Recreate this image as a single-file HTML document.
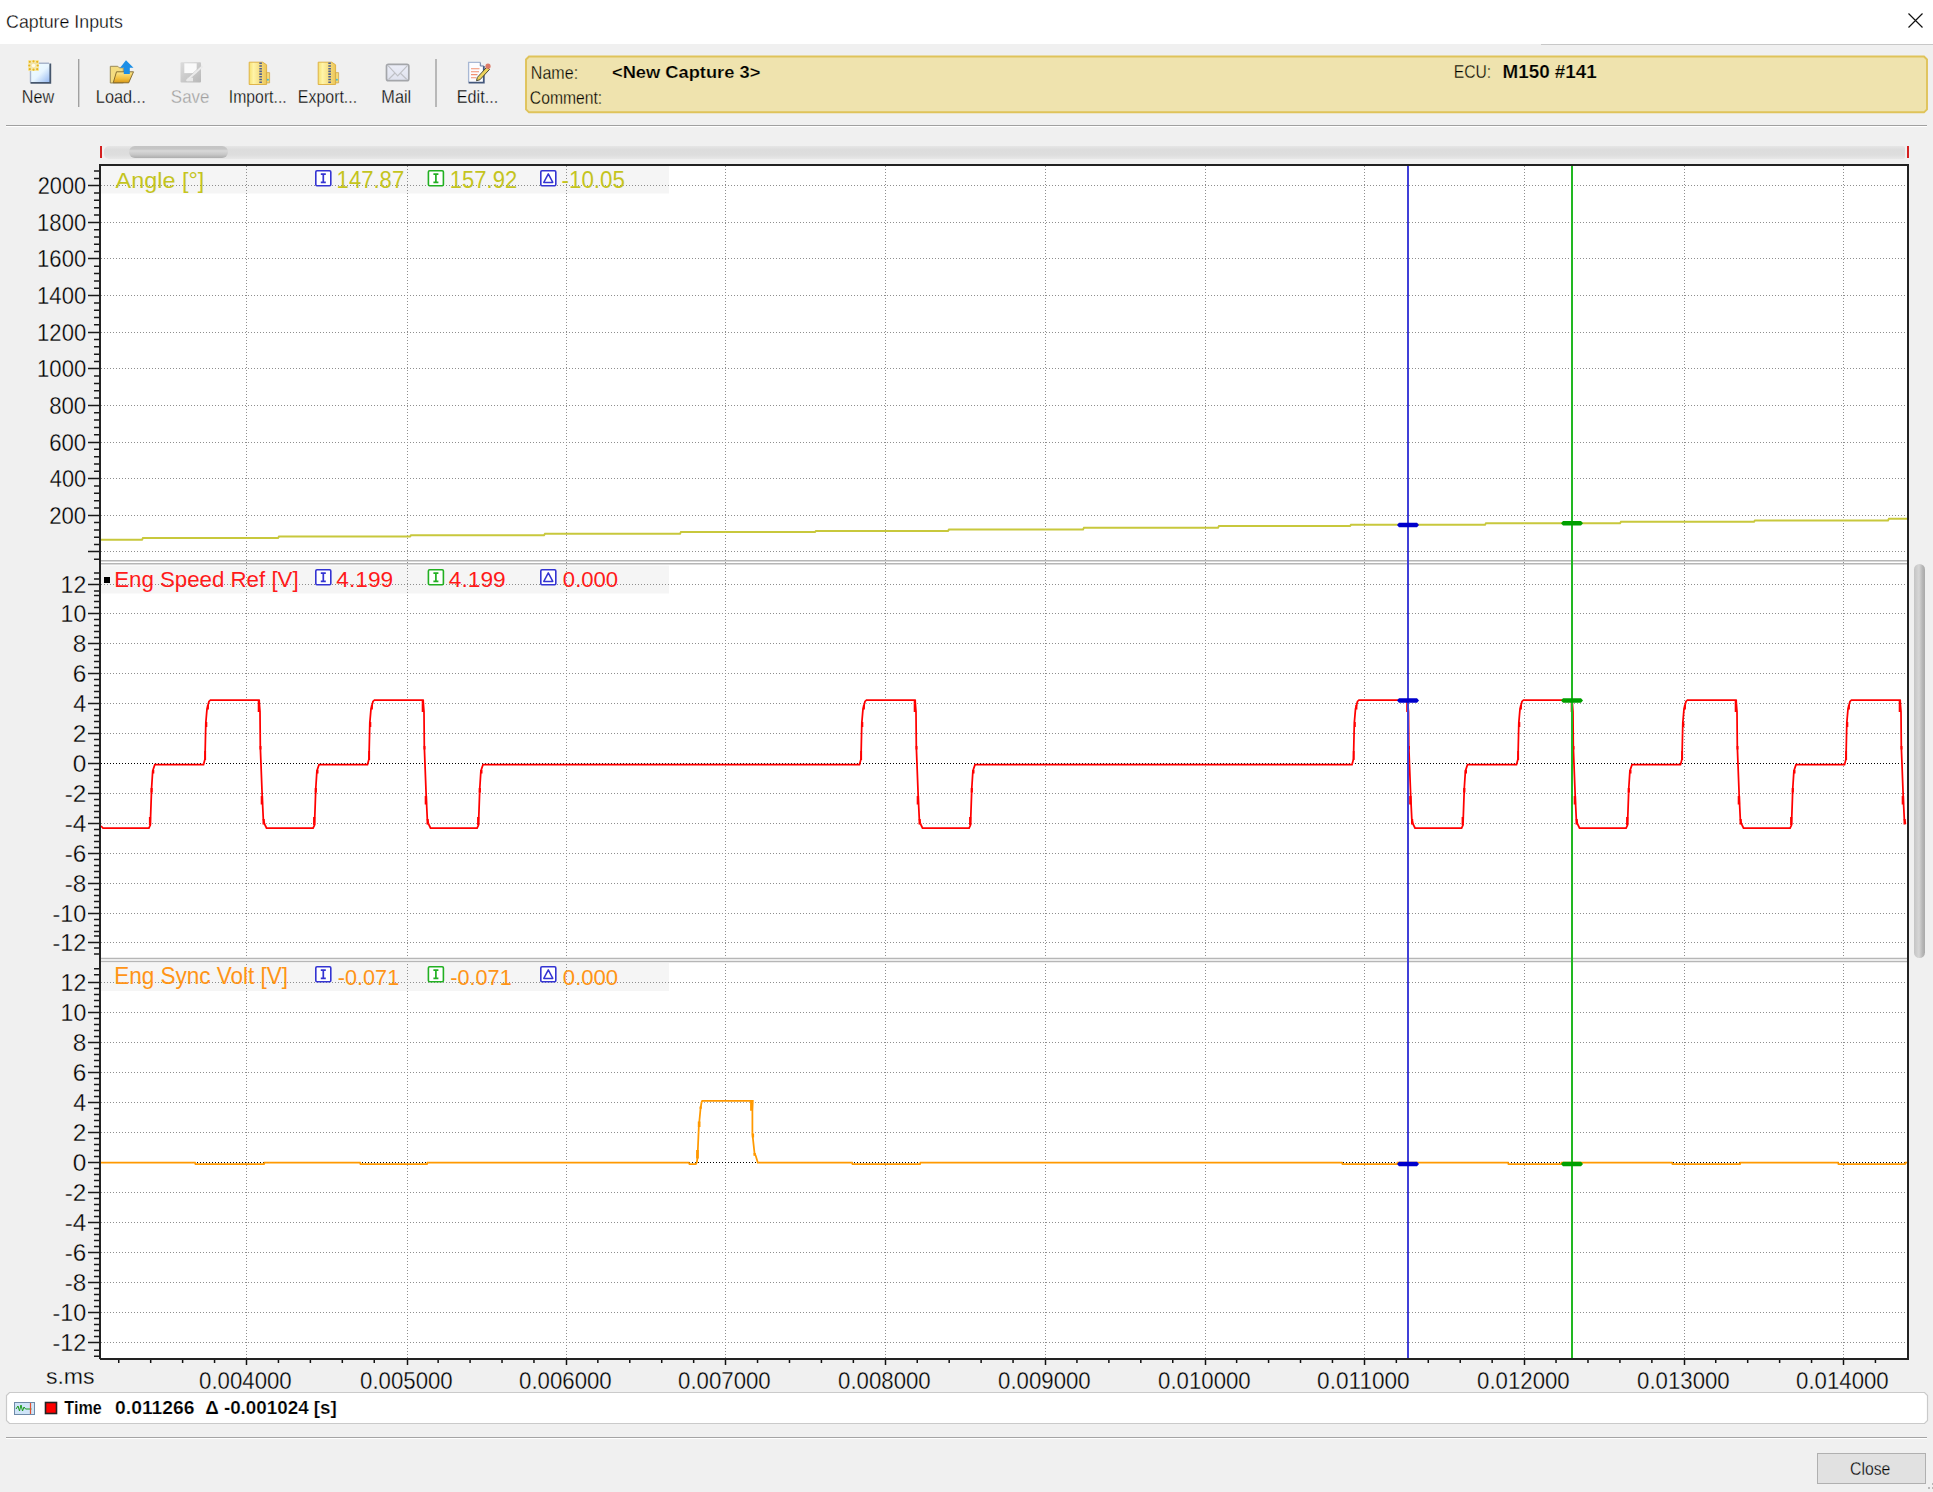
<!DOCTYPE html>
<html><head><meta charset="utf-8">
<style>
html,body{margin:0;padding:0;}
body{width:1933px;height:1492px;overflow:hidden;background:#f0f0f0;position:relative;font-family:"Liberation Sans", sans-serif;color:#000;}
.ab{position:absolute;}
svg text{font-family:"Liberation Sans", sans-serif;}
</style></head><body>
<div class="ab" style="left:0;top:0;width:1933px;height:44px;background:#fff"></div>
<svg class="ab" style="left:1900px;top:5px" width="33" height="33"><path d="M8.5 8.5L22.5 22.5M22.5 8.5L8.5 22.5" stroke="#111" stroke-width="1.2"/></svg>
<div class="ab" style="left:1541px;top:44px;width:392px;height:1px;background:#c8c8c8"></div>
<svg class="ab" style="left:0;top:0" width="520" height="120" viewBox="0 0 520 120">
 <defs>
  <linearGradient id="gNew" x1="0" y1="0" x2="1" y2="1"><stop offset="0" stop-color="#f0ffff"/><stop offset="0.5" stop-color="#e8f6ff"/><stop offset="1" stop-color="#8fb4f0"/></linearGradient>
  <linearGradient id="gFold" x1="0" y1="0" x2="0" y2="1"><stop offset="0" stop-color="#fbe890"/><stop offset="0.6" stop-color="#f2c040"/><stop offset="1" stop-color="#d89818"/></linearGradient>
  <linearGradient id="gZip" x1="0" y1="0" x2="1" y2="0"><stop offset="0" stop-color="#f6e070"/><stop offset="0.25" stop-color="#fff4a8"/><stop offset="1" stop-color="#ecc658"/></linearGradient>
  <linearGradient id="gSave" x1="0" y1="0" x2="1" y2="1"><stop offset="0" stop-color="#dcdcdc"/><stop offset="1" stop-color="#b8b8b8"/></linearGradient>
  <linearGradient id="gMail" x1="0" y1="0" x2="0" y2="1"><stop offset="0" stop-color="#eceef8"/><stop offset="1" stop-color="#dfe2ee"/></linearGradient>
 </defs>
 <!-- New -->
 <rect x="31" y="63.5" width="19.5" height="19" fill="url(#gNew)"/>
 <path d="M30.5 82.5V63.3H49" stroke="#a9b6cc" stroke-width="1.4" fill="none"/>
 <path d="M50.3 63.5V82.8H30.5" stroke="#46566c" stroke-width="1.8" fill="none"/>
 <rect x="28" y="60" width="11" height="11" fill="#f7e6a0" opacity="0.9"/>
 <g fill="#e6b41c">
  <circle cx="29.8" cy="61.8" r="1.1"/><circle cx="33.5" cy="61.3" r="1.1"/><circle cx="37.2" cy="61.8" r="1.1"/>
  <circle cx="29.3" cy="65.5" r="1.1"/><circle cx="37.7" cy="65.5" r="1.1"/>
  <circle cx="29.8" cy="69.2" r="1.1"/><circle cx="33.5" cy="69.7" r="1.1"/><circle cx="37.2" cy="69.2" r="1.1"/>
 </g>
 <circle cx="33.5" cy="65.5" r="1.8" fill="#fffbe6"/>
 <!-- Load -->
 <path d="M110.3 83V66.3h7.5l1.5 1.5h4v15z" fill="#f4dc80" stroke="#9a8a58" stroke-width="1"/>
 <path d="M116.5 71.8h17l-4.8 11h-15.5z" fill="url(#gFold)" stroke="#7a6228" stroke-width="0.9"/>
 <path d="M126 60.3l7.5 7.5h-3.7v6.2h-6v-6.2h-3.7z" fill="#1c8ee6"/>
 <!-- Save (disabled) -->
 <rect x="180.5" y="62.3" width="20.5" height="20.3" rx="1" fill="url(#gSave)"/>
 <rect x="184.3" y="63.3" width="12.4" height="9.8" fill="#fafafa"/>
 <rect x="187.4" y="77.7" width="5.6" height="3.6" fill="#e8e8e8"/>
 <path d="M186.4 80.8L202.4 66.3" stroke="#eaeaea" stroke-width="2.2"/>
 <path d="M185.6 79.8L201.2 65.6" stroke="#c8c8c8" stroke-width="0.6"/>
 <!-- Import -->
 <path d="M249.2 62.2h13.5l3.9 2.6v19.7h-17.4z" fill="url(#gZip)" stroke="#dcae3c" stroke-width="0.9"/>
 <path d="M266.6 72.6h3v10.3h-3z" fill="#f4dc78" stroke="#cfa040" stroke-width="0.7"/>
 <circle cx="267.9" cy="79.8" r="1" fill="#40b8d8"/>
 <path d="M260.6 62.5v21.5" stroke="#50608e" stroke-width="2.6" stroke-dasharray="1.6 1.1"/>
 <!-- Export -->
 <path d="M318.2 62.2h13.5l3.9 2.6v19.7h-17.4z" fill="url(#gZip)" stroke="#dcae3c" stroke-width="0.9"/>
 <path d="M335.6 72.6h3v10.3h-3z" fill="#f4dc78" stroke="#cfa040" stroke-width="0.7"/>
 <circle cx="336.9" cy="79.8" r="1" fill="#40b8d8"/>
 <path d="M329.6 62.5v21.5" stroke="#50608e" stroke-width="2.6" stroke-dasharray="1.6 1.1"/>
 <!-- Mail -->
 <rect x="386.5" y="64.3" width="22.3" height="16.4" rx="2" fill="url(#gMail)" stroke="#a4a6aa" stroke-width="1.7"/>
 <path d="M388 65.6l9.7 10.3l9.7-10.3M388.5 79.5l6.3-6.2M406.8 79.5l-6.3-6.2" stroke="#bfc1c6" stroke-width="1.2" fill="none"/>
 <!-- Edit -->
 <path d="M468.8 62.5h11.5l3.5 3.5v16.3h-15z" fill="#fdfdff"/>
 <path d="M468.6 82.3V62.3h11.8" stroke="#a8b8d4" stroke-width="1.3" fill="none"/>
 <path d="M483.8 66v16.7h-15.2" stroke="#44587c" stroke-width="1.8" fill="none"/>
 <path d="M480.3 62.5v3.5h3.5" stroke="#6a7ea0" stroke-width="1" fill="#dfe8f8"/>
 <path d="M471 68.7h8.5M471 71.8h8M471 74.6h6.5M471 77.7h5" stroke="#f29070" stroke-width="1.1"/>
 <path d="M477.3 77.4l9.6-10.4l2.6 2.4l-9.6 10.4l-3.4 0.9z" fill="#ecd25a" stroke="#3a3a2a" stroke-width="0.9"/>
 <circle cx="488" cy="66.2" r="2.6" fill="#dc7a68"/>
 <!-- separators -->
 <rect x="78" y="59" width="1.4" height="48" fill="#a0a0a0"/>
 <rect x="435.3" y="59" width="1.4" height="48" fill="#a0a0a0"/>
</svg>

<svg class="ab" style="left:520px;top:50px" width="1413" height="70"><path d="M9 6.5H1404L1407 9.5V59.3L1404 62.3H9L6 59.3V9.5Z" fill="#efe3ae" stroke="#dfc35a" stroke-width="1.9"/></svg>
<div class="ab" style="left:6px;top:125px;width:1921px;height:1px;background:#a0a0a0"></div>
<div class="ab" style="left:6px;top:126px;width:1921px;height:1px;background:#fff"></div>
<div class="ab" style="left:104px;top:146px;width:1801px;height:12.5px;border-radius:5px 2px 2px 5px;background:linear-gradient(#e6e6e6,#dcdcdc 30%,#dedede 70%,#e8e8e8)"></div>
<div class="ab" style="left:129px;top:146px;width:99px;height:12px;border-radius:6px;background:linear-gradient(#c4c4c4 0,#c6c6c6 25%,#d8d8d8 40%,#c8c8c8 70%,#adadad 100%)"></div>
<div class="ab" style="left:100px;top:146px;width:2px;height:12px;background:#d42020"></div>
<div class="ab" style="left:1907px;top:146px;width:2px;height:12px;background:#d42020"></div>
<div class="ab" style="left:101px;top:166px;width:1806px;height:1192px;background:#fff"></div>
<div class="ab" style="left:1914px;top:564px;width:11px;height:394px;border-radius:5.5px;background:linear-gradient(90deg,#c4c4c4,#d6d6d6 45%,#b4b4b4 80%,#aaaaaa)"></div>
<svg class="ab" style="left:0;top:1385px" width="1933" height="45"><path d="M9.5 7.5H1924.5L1927.5 10.5V35.5L1924.5 38.5H9.5L6.5 35.5V10.5Z" fill="#fff" stroke="#cacaca" stroke-width="1.2"/></svg>
<div class="ab" style="left:6px;top:1436.5px;width:1921px;height:1.5px;background:#a4a4a4"></div>
<div class="ab" style="left:6px;top:1438px;width:1921px;height:1px;background:#fff"></div>
<div class="ab" style="left:1817px;top:1453px;width:107px;height:29px;border:1.5px solid #b0b0b0;background:#e1e1e1"></div>
<svg class="ab" style="left:1920px;top:1475px" width="13" height="17"><rect x="8" y="12" width="2" height="2" fill="#b8b8b8"/><rect x="12" y="12" width="2" height="2" fill="#b8b8b8"/><rect x="12" y="8" width="2" height="2" fill="#b8b8b8"/></svg>
<svg class="ab" style="left:0;top:1390px" width="60" height="30">
 <rect x="14.5" y="12.5" width="20" height="12" fill="#cfe4f8" stroke="#6f8aa8" stroke-width="1"/>
 <path d="M16 19l2-3l1.5 5l1.5-6l1.5 6l1.5-4l1.5 2h6" stroke="#1a9a1a" stroke-width="1" fill="none"/>
 <path d="M30.5 13v11" stroke="#e05030" stroke-width="1.2"/>
 <rect x="45.5" y="12.5" width="11" height="11" fill="#ff0000" stroke="#222" stroke-width="1.6"/>
</svg>
<svg class="ab" style="left:0;top:0" width="1933" height="1492" viewBox="0 0 1933 1492">
<rect x="101" y="166" width="568" height="27.5" fill="#f5f5f5"/>
<rect x="101" y="565.5" width="568" height="28" fill="#f5f5f5"/>
<rect x="101" y="963" width="568" height="28" fill="#f5f5f5"/>
<path d="M101 551.5H1907 M101 515.5H1907 M101 478.5H1907 M101 442.5H1907 M101 405.5H1907 M101 368.5H1907 M101 332.5H1907 M101 295.5H1907 M101 258.5H1907 M101 222.5H1907 M101 185.5H1907 M101 942.5H1907 M101 913.5H1907 M101 883.5H1907 M101 853.5H1907 M101 823.5H1907 M101 793.5H1907 M101 733.5H1907 M101 703.5H1907 M101 673.5H1907 M101 643.5H1907 M101 613.5H1907 M101 584.5H1907 M101 1342.5H1907 M101 1312.5H1907 M101 1282.5H1907 M101 1252.5H1907 M101 1222.5H1907 M101 1192.5H1907 M101 1132.5H1907 M101 1102.5H1907 M101 1072.5H1907 M101 1042.5H1907 M101 1012.5H1907 M101 982.5H1907" stroke="#8e8e8e" stroke-width="1" stroke-dasharray="1 2" shape-rendering="crispEdges" fill="none"/>
<path d="M246.5 166V1358 M407.5 166V1358 M566.5 166V1358 M725.5 166V1358 M885.5 166V1358 M1045.5 166V1358 M1205.5 166V1358 M1364.5 166V1358 M1524.5 166V1358 M1684.5 166V1358 M1843.5 166V1358" stroke="#8e8e8e" stroke-width="1" stroke-dasharray="1 2" shape-rendering="crispEdges" fill="none"/>
<path d="M101 763.5H1907 M101 1162.5H1907" stroke="#000" stroke-width="1" stroke-dasharray="1 2" shape-rendering="crispEdges" fill="none"/>
<path d="M101 560.8H1907M101 563.8H1907M101 958.5H1907M101 961.5H1907" stroke="#b6b6b6" stroke-width="1.6"/>
<path d="M101 539.7H142L143 538.0H278L279 536.6H410L411 535.3H544L545 533.8H680L681 531.9H815L816 530.9H948L949 529.6H1083L1084 527.8H1218L1219 526.1H1350L1351 524.8H1485L1486 523.3H1620L1621 521.7H1754L1755 520.4H1888L1889 518.8H1907" stroke="#c8c83c" stroke-width="2" fill="none"/>
<path d="M101 826 L103 828 L148.9 828 L150.3 825 L151.6 788 L152.7 771 L154.8 764.7 L203.5 764.7 L205 759 L205.8 723 L207 709 L209 701.5 L210.5 700 L259 700 L260 712 L260.3 746 L262.2 796 L263.3 819 L264.5 824 L266.5 828 L313.1 828 L314.5 825 L315.8 788 L316.9 771 L319 764.7 L367.5 764.7 L369 759 L369.8 723 L371 709 L373 701.5 L374.5 700 L423 700 L424 712 L424.3 746 L426.2 796 L427.3 819 L428.5 824 L430.5 828 L477.1 828 L478.5 825 L479.8 788 L480.9 771 L483 764.7 L859.5 764.7 L861 759 L861.8 723 L863 709 L865 701.5 L866.5 700 L915 700 L916 712 L916.3 746 L918.2 796 L919.3 819 L920.5 824 L922.5 828 L969.1 828 L970.5 825 L971.8 788 L972.9 771 L975 764.7 L1352 764.7 L1353.5 759 L1354.3 723 L1355.5 709 L1357.5 701.5 L1359 700 L1407.5 700 L1408.5 712 L1408.8 746 L1410.7 796 L1411.8 819 L1413 824 L1415 828 L1461.6 828 L1463 825 L1464.3 788 L1465.4 771 L1467.5 764.7 L1516.5 764.7 L1518 759 L1518.8 723 L1520 709 L1522 701.5 L1523.5 700 L1572 700 L1573 712 L1573.3 746 L1575.2 796 L1576.3 819 L1577.5 824 L1579.5 828 L1626.1 828 L1627.5 825 L1628.8 788 L1629.9 771 L1632 764.7 L1680.5 764.7 L1682 759 L1682.8 723 L1684 709 L1686 701.5 L1687.5 700 L1736 700 L1737 712 L1737.3 746 L1739.2 796 L1740.3 819 L1741.5 824 L1743.5 828 L1790.1 828 L1791.5 825 L1792.8 788 L1793.9 771 L1796 764.7 L1844.5 764.7 L1846 759 L1846.8 723 L1848 709 L1850 701.5 L1851.5 700 L1900 700 L1901 712 L1901.3 746 L1903.2 796 L1904.3 819 L1905.5 824" stroke="#ff0000" stroke-width="1.75" fill="none"/>
<path d="M148.9 817h2.2v8h-2.2zM150.5 788h2.2v4.5h-2.2zM152.1 770h2.2v3.5h-2.2zM204.3 751h1.8v9h-1.8zM205.5 722h1.8v5h-1.8zM206.9 705h2v4.5h-2zM257.7 700h2.4v12h-2.4zM259.5 746h2v3.5h-2zM260.7 796h2.4v8.5h-2.4zM262.5 819h2.2v5.5h-2.2zM313.1 817h2.2v8h-2.2zM314.7 788h2.2v4.5h-2.2zM316.3 770h2.2v3.5h-2.2zM368.3 751h1.8v9h-1.8zM369.5 722h1.8v5h-1.8zM370.9 705h2v4.5h-2zM421.7 700h2.4v12h-2.4zM423.5 746h2v3.5h-2zM424.7 796h2.4v8.5h-2.4zM426.5 819h2.2v5.5h-2.2zM477.1 817h2.2v8h-2.2zM478.7 788h2.2v4.5h-2.2zM480.3 770h2.2v3.5h-2.2zM860.3 751h1.8v9h-1.8zM861.5 722h1.8v5h-1.8zM862.9 705h2v4.5h-2zM913.7 700h2.4v12h-2.4zM915.5 746h2v3.5h-2zM916.7 796h2.4v8.5h-2.4zM918.5 819h2.2v5.5h-2.2zM969.1 817h2.2v8h-2.2zM970.7 788h2.2v4.5h-2.2zM972.3 770h2.2v3.5h-2.2zM1352.8 751h1.8v9h-1.8zM1354 722h1.8v5h-1.8zM1355.4 705h2v4.5h-2zM1406.2 700h2.4v12h-2.4zM1408 746h2v3.5h-2zM1409.2 796h2.4v8.5h-2.4zM1411 819h2.2v5.5h-2.2zM1461.6 817h2.2v8h-2.2zM1463.2 788h2.2v4.5h-2.2zM1464.8 770h2.2v3.5h-2.2zM1517.3 751h1.8v9h-1.8zM1518.5 722h1.8v5h-1.8zM1519.9 705h2v4.5h-2zM1570.7 700h2.4v12h-2.4zM1572.5 746h2v3.5h-2zM1573.7 796h2.4v8.5h-2.4zM1575.5 819h2.2v5.5h-2.2zM1626.1 817h2.2v8h-2.2zM1627.7 788h2.2v4.5h-2.2zM1629.3 770h2.2v3.5h-2.2zM1681.3 751h1.8v9h-1.8zM1682.5 722h1.8v5h-1.8zM1683.9 705h2v4.5h-2zM1734.7 700h2.4v12h-2.4zM1736.5 746h2v3.5h-2zM1737.7 796h2.4v8.5h-2.4zM1739.5 819h2.2v5.5h-2.2zM1790.1 817h2.2v8h-2.2zM1791.7 788h2.2v4.5h-2.2zM1793.3 770h2.2v3.5h-2.2zM1845.3 751h1.8v9h-1.8zM1846.5 722h1.8v5h-1.8zM1847.9 705h2v4.5h-2zM1898.7 700h2.4v12h-2.4zM1900.5 746h2v3.5h-2zM1901.7 796h2.4v8.5h-2.4zM1903.5 819h2.2v5.5h-2.2z" fill="#ff0000"/>
<path d="M101 1162.5H195L195.5 1164.0H264L264.5 1162.5H360L360.5 1164.0H427L427.5 1162.5H688.8L689.5 1164.1H695.8L696.8 1162.4L697.5 1158L698.8 1127L700.5 1109L701.5 1102.5L702.2 1100.8H752.8L752.4 1111L752.4 1133.6L754.5 1153L755.8 1156L757.8 1162.5H852L852.5 1164.0H920L920.5 1162.5H1342L1342.5 1164.0H1397L1397.5 1162.5H1508L1508.5 1164.0H1561L1561.5 1162.5H1672L1672.5 1164.0H1740L1740.5 1162.5H1838L1838.5 1164.0H1905L1905.5 1162.5H1907" stroke="#ff9900" stroke-width="1.75" fill="none"/>
<path d="M696.1 1150h2.7v8.4h-2.7zM697.8 1121.6h2.7v5.3h-2.7zM699.5 1106.5h2.3v2.3h-2.3zM750.1 1101h2.3v9.8h-2.3zM751.8 1133.6h2.3v4h-2.3zM753.4 1153h2.4v2.7h-2.4z" fill="#ff9900"/>
<rect x="1407" y="166" width="2" height="1192" fill="#4040d8"/>
<rect x="1571" y="166" width="2" height="1192" fill="#22b822"/>
<path d="M1397 525L1399 522.75H1417L1419 525L1417 527.25H1399Z" fill="#0000cc"/>
<path d="M1561 523.2L1563 520.95H1581L1583 523.2L1581 525.45H1563Z" fill="#00a000"/>
<path d="M1397 700.5L1399 698.25H1417L1419 700.5L1417 702.75H1399Z" fill="#0000cc"/>
<path d="M1561 700.5L1563 698.25H1581L1583 700.5L1581 702.75H1563Z" fill="#00a000"/>
<path d="M1397 1164L1399 1161.75H1417L1419 1164L1417 1166.25H1399Z" fill="#0000cc"/>
<path d="M1561 1164L1563 1161.75H1581L1583 1164L1581 1166.25H1563Z" fill="#00a000"/>
<path d="M100 1359V165H1908V1359H100" stroke="#222" stroke-width="2" fill="none" shape-rendering="crispEdges"/>
<path d="M94 559.22H99 M88 551.5H99 M94 544.58H99 M94 537.25H99 M94 529.93H99 M94 522.6H99 M88 515.5H99 M94 507.96H99 M94 500.63H99 M94 493.31H99 M94 485.98H99 M88 478.5H99 M94 471.34H99 M94 464.01H99 M94 456.69H99 M94 449.36H99 M88 442.5H99 M94 434.72H99 M94 427.39H99 M94 420.07H99 M94 412.74H99 M88 405.5H99 M94 398.1H99 M94 390.77H99 M94 383.45H99 M94 376.12H99 M88 368.5H99 M94 361.48H99 M94 354.15H99 M94 346.83H99 M94 339.5H99 M88 332.5H99 M94 324.86H99 M94 317.53H99 M94 310.21H99 M94 302.88H99 M88 295.5H99 M94 288.24H99 M94 280.91H99 M94 273.59H99 M94 266.26H99 M88 258.5H99 M94 251.62H99 M94 244.29H99 M94 236.97H99 M94 229.64H99 M88 222.5H99 M94 215H99 M94 207.67H99 M94 200.35H99 M94 193.02H99 M88 185.5H99 M94 178.38H99 M94 171.05H99 M94 954H99 M94 948H99 M88 942.5H99 M94 936H99 M94 931.5H99 M94 925.5H99 M94 919.5H99 M88 913.5H99 M94 907.5H99 M94 901.5H99 M94 895.5H99 M94 889.5H99 M88 883.5H99 M94 877.5H99 M94 871.5H99 M94 865.5H99 M94 859.5H99 M88 853.5H99 M94 847.5H99 M94 841.5H99 M94 835.5H99 M94 829.5H99 M88 823.5H99 M94 817.5H99 M94 811.5H99 M94 805.5H99 M94 799.5H99 M88 793.5H99 M94 787.5H99 M94 781.5H99 M94 775.5H99 M94 769.5H99 M88 763.5H99 M94 757.5H99 M94 751.5H99 M94 745.5H99 M94 739.5H99 M88 733.5H99 M94 727.5H99 M94 721.5H99 M94 715.5H99 M94 709.5H99 M88 703.5H99 M94 697.5H99 M94 691.5H99 M94 685.5H99 M94 679.5H99 M88 673.5H99 M94 667.5H99 M94 661.5H99 M94 655.5H99 M94 649.5H99 M88 643.5H99 M94 637.5H99 M94 631.5H99 M94 625.5H99 M94 619.5H99 M88 613.5H99 M94 607.5H99 M94 601.5H99 M94 595.5H99 M94 590.9H99 M88 584.5H99 M94 578.9H99 M94 572.9H99 M94 1356.2H99 M94 1350.2H99 M88 1342.5H99 M94 1336.5H99 M94 1330.5H99 M94 1324.5H99 M94 1318.5H99 M88 1312.5H99 M94 1306.5H99 M94 1300.5H99 M94 1294.5H99 M94 1288.5H99 M88 1282.5H99 M94 1276.5H99 M94 1270.5H99 M94 1264.5H99 M94 1258.5H99 M88 1252.5H99 M94 1246.5H99 M94 1240.5H99 M94 1234.5H99 M94 1228.5H99 M88 1222.5H99 M94 1216.5H99 M94 1210.5H99 M94 1204.5H99 M94 1198.5H99 M88 1192.5H99 M94 1186.5H99 M94 1180.5H99 M94 1174.5H99 M94 1168.5H99 M88 1162.5H99 M94 1156.5H99 M94 1150.5H99 M94 1144.5H99 M94 1138.5H99 M88 1132.5H99 M94 1126.5H99 M94 1120.5H99 M94 1114.5H99 M94 1108.5H99 M88 1102.5H99 M94 1096.5H99 M94 1090.5H99 M94 1084.5H99 M94 1078.5H99 M88 1072.5H99 M94 1066.5H99 M94 1060.5H99 M94 1054.5H99 M94 1048.5H99 M88 1042.5H99 M94 1036.5H99 M94 1030.5H99 M94 1024.5H99 M94 1018.5H99 M88 1012.5H99 M94 1006.5H99 M94 1000.5H99 M94 994.5H99 M94 988.5H99 M88 982.5H99 M94 974.8H99 M94 968.8H99" stroke="#1a1a1a" stroke-width="1.5" fill="none"/>
<path d="M246.5 1360V1365 M407.5 1360V1365 M566.5 1360V1365 M725.5 1360V1365 M885.5 1360V1365 M1045.5 1360V1365 M1205.5 1360V1365 M1364.5 1360V1365 M1524.5 1360V1365 M1684.5 1360V1365 M1843.5 1360V1365 M118.74 1360V1363 M150.68 1360V1363 M182.62 1360V1363 M214.56 1360V1363 M278.44 1360V1363 M310.38 1360V1363 M342.32 1360V1363 M374.26 1360V1363 M438.14 1360V1363 M470.08 1360V1363 M502.02 1360V1363 M533.96 1360V1363 M597.84 1360V1363 M629.78 1360V1363 M661.72 1360V1363 M693.66 1360V1363 M757.54 1360V1363 M789.48 1360V1363 M821.42 1360V1363 M853.36 1360V1363 M917.24 1360V1363 M949.18 1360V1363 M981.12 1360V1363 M1013.06 1360V1363 M1076.94 1360V1363 M1108.88 1360V1363 M1140.82 1360V1363 M1172.76 1360V1363 M1236.64 1360V1363 M1268.58 1360V1363 M1300.52 1360V1363 M1332.46 1360V1363 M1396.34 1360V1363 M1428.28 1360V1363 M1460.22 1360V1363 M1492.16 1360V1363 M1556.04 1360V1363 M1587.98 1360V1363 M1619.92 1360V1363 M1651.86 1360V1363 M1715.74 1360V1363 M1747.68 1360V1363 M1779.62 1360V1363 M1811.56 1360V1363 M1875.44 1360V1363" stroke="#111" stroke-width="1.5" fill="none"/>
<rect x="315.8" y="170.8" width="15" height="15" rx="1.2" fill="#fff" stroke="#3434d2" stroke-width="1.6"/><path d="M320.8 174.2H325.8M323.3 174.2V182.4M320.8 182.4H325.8" stroke="#3434d2" stroke-width="1.7" fill="none"/>
<rect x="428.4" y="170.8" width="15" height="15" rx="1.2" fill="#fff" stroke="#22b022" stroke-width="1.6"/><path d="M433.4 174.2H438.4M435.9 174.2V182.4M433.4 182.4H438.4" stroke="#22b022" stroke-width="1.7" fill="none"/>
<rect x="540.8" y="170.8" width="15" height="15" rx="1.2" fill="#fff" stroke="#3434d2" stroke-width="1.6"/><path d="M548.3 173.8L552.8 182.4H543.8Z" stroke="#3434d2" stroke-width="1.5" fill="none" stroke-linejoin="round"/>
<rect x="315.8" y="569.8" width="15" height="15" rx="1.2" fill="#fff" stroke="#3434d2" stroke-width="1.6"/><path d="M320.8 573.2H325.8M323.3 573.2V581.4M320.8 581.4H325.8" stroke="#3434d2" stroke-width="1.7" fill="none"/>
<rect x="428.4" y="569.8" width="15" height="15" rx="1.2" fill="#fff" stroke="#22b022" stroke-width="1.6"/><path d="M433.4 573.2H438.4M435.9 573.2V581.4M433.4 581.4H438.4" stroke="#22b022" stroke-width="1.7" fill="none"/>
<rect x="540.8" y="569.8" width="15" height="15" rx="1.2" fill="#fff" stroke="#3434d2" stroke-width="1.6"/><path d="M548.3 572.8L552.8 581.4H543.8Z" stroke="#3434d2" stroke-width="1.5" fill="none" stroke-linejoin="round"/>
<rect x="315.8" y="966.8" width="15" height="15" rx="1.2" fill="#fff" stroke="#3434d2" stroke-width="1.6"/><path d="M320.8 970.2H325.8M323.3 970.2V978.4M320.8 978.4H325.8" stroke="#3434d2" stroke-width="1.7" fill="none"/>
<rect x="428.4" y="966.8" width="15" height="15" rx="1.2" fill="#fff" stroke="#22b022" stroke-width="1.6"/><path d="M433.4 970.2H438.4M435.9 970.2V978.4M433.4 978.4H438.4" stroke="#22b022" stroke-width="1.7" fill="none"/>
<rect x="540.8" y="966.8" width="15" height="15" rx="1.2" fill="#fff" stroke="#3434d2" stroke-width="1.6"/><path d="M548.3 969.8L552.8 978.4H543.8Z" stroke="#3434d2" stroke-width="1.5" fill="none" stroke-linejoin="round"/>
<rect x="104" y="577" width="6" height="6" fill="#000"/>
<g>
<text x="6.14" y="28.01" font-size="17.59" fill="#000" stroke="#ffffff" stroke-width="0.3" textLength="116.71" lengthAdjust="spacingAndGlyphs">Capture Inputs</text>
<text x="21.83" y="102.75" font-size="19.19" fill="#000" stroke="#f0f0f0" stroke-width="0.3" textLength="32.4" lengthAdjust="spacingAndGlyphs">New</text>
<text x="95.83" y="102.75" font-size="19.19" fill="#000" stroke="#f0f0f0" stroke-width="0.3" textLength="49.84" lengthAdjust="spacingAndGlyphs">Load...</text>
<text x="170.83" y="102.75" font-size="19.19" fill="#a0a0a0" stroke="#f0f0f0" stroke-width="0.3" textLength="38.62" lengthAdjust="spacingAndGlyphs">Save</text>
<text x="228.83" y="102.75" font-size="19.19" fill="#000" stroke="#f0f0f0" stroke-width="0.3" textLength="57.82" lengthAdjust="spacingAndGlyphs">Import...</text>
<text x="297.85" y="102.75" font-size="19.19" fill="#000" stroke="#f0f0f0" stroke-width="0.3" textLength="59.3" lengthAdjust="spacingAndGlyphs">Export...</text>
<text x="381.37" y="102.75" font-size="19.19" fill="#000" stroke="#f0f0f0" stroke-width="0.3" textLength="29.78" lengthAdjust="spacingAndGlyphs">Mail</text>
<text x="456.85" y="102.75" font-size="19.19" fill="#000" stroke="#f0f0f0" stroke-width="0.3" textLength="41.3" lengthAdjust="spacingAndGlyphs">Edit...</text>
<text x="530.87" y="78.53" font-size="18.87" fill="#000" stroke="#efe3ae" stroke-width="0.3" textLength="47.26" lengthAdjust="spacingAndGlyphs">Name:</text>
<text x="529.87" y="103.55" font-size="18.87" fill="#000" stroke="#efe3ae" stroke-width="0.3" textLength="72.26" lengthAdjust="spacingAndGlyphs">Comment:</text>
<text x="611.97" y="77.77" font-size="17.18" fill="#000" font-weight="bold" stroke="#efe3ae" stroke-width="0.2" textLength="148.34" lengthAdjust="spacingAndGlyphs">&lt;New Capture 3&gt;</text>
<text x="1453.69" y="78.27" font-size="17.91" fill="#000" stroke="#efe3ae" stroke-width="0.3" textLength="37.41" lengthAdjust="spacingAndGlyphs">ECU:</text>
<text x="1502.57" y="78.27" font-size="19.19" fill="#000" font-weight="bold" stroke="#efe3ae" stroke-width="0.2" textLength="94.14" lengthAdjust="spacingAndGlyphs">M150 #141</text>
<text x="49.16" y="523.85" font-size="23.95" fill="#000" stroke="#f0f0f0" stroke-width="0.3" textLength="37.07" lengthAdjust="spacingAndGlyphs">200</text>
<text x="49.86" y="486.85" font-size="23.95" fill="#000" stroke="#f0f0f0" stroke-width="0.3" textLength="36.37" lengthAdjust="spacingAndGlyphs">400</text>
<text x="49.16" y="450.85" font-size="23.95" fill="#000" stroke="#f0f0f0" stroke-width="0.3" textLength="37.07" lengthAdjust="spacingAndGlyphs">600</text>
<text x="49.16" y="413.85" font-size="23.95" fill="#000" stroke="#f0f0f0" stroke-width="0.3" textLength="37.07" lengthAdjust="spacingAndGlyphs">800</text>
<text x="37.06" y="376.85" font-size="23.95" fill="#000" stroke="#f0f0f0" stroke-width="0.3" textLength="49.17" lengthAdjust="spacingAndGlyphs">1000</text>
<text x="37.06" y="340.85" font-size="23.95" fill="#000" stroke="#f0f0f0" stroke-width="0.3" textLength="49.17" lengthAdjust="spacingAndGlyphs">1200</text>
<text x="37.06" y="303.85" font-size="23.95" fill="#000" stroke="#f0f0f0" stroke-width="0.3" textLength="49.17" lengthAdjust="spacingAndGlyphs">1400</text>
<text x="37.06" y="266.85" font-size="23.95" fill="#000" stroke="#f0f0f0" stroke-width="0.3" textLength="49.17" lengthAdjust="spacingAndGlyphs">1600</text>
<text x="37.06" y="230.85" font-size="23.95" fill="#000" stroke="#f0f0f0" stroke-width="0.3" textLength="49.17" lengthAdjust="spacingAndGlyphs">1800</text>
<text x="37.76" y="193.85" font-size="23.95" fill="#000" stroke="#f0f0f0" stroke-width="0.3" textLength="48.47" lengthAdjust="spacingAndGlyphs">2000</text>
<text x="52.56" y="950.85" font-size="23.95" fill="#000" stroke="#f0f0f0" stroke-width="0.3" textLength="33.67" lengthAdjust="spacingAndGlyphs">-12</text>
<text x="52.56" y="921.85" font-size="23.95" fill="#000" stroke="#f0f0f0" stroke-width="0.3" textLength="33.67" lengthAdjust="spacingAndGlyphs">-10</text>
<text x="64.66" y="891.85" font-size="23.95" fill="#000" stroke="#f0f0f0" stroke-width="0.3" textLength="21.57" lengthAdjust="spacingAndGlyphs">-8</text>
<text x="64.66" y="861.85" font-size="23.95" fill="#000" stroke="#f0f0f0" stroke-width="0.3" textLength="21.57" lengthAdjust="spacingAndGlyphs">-6</text>
<text x="64.66" y="831.85" font-size="23.95" fill="#000" stroke="#f0f0f0" stroke-width="0.3" textLength="21.57" lengthAdjust="spacingAndGlyphs">-4</text>
<text x="64.66" y="801.85" font-size="23.95" fill="#000" stroke="#f0f0f0" stroke-width="0.3" textLength="21.57" lengthAdjust="spacingAndGlyphs">-2</text>
<text x="72.66" y="771.85" font-size="23.95" fill="#000" stroke="#f0f0f0" stroke-width="0.3" textLength="13.57" lengthAdjust="spacingAndGlyphs">0</text>
<text x="72.66" y="741.85" font-size="23.95" fill="#000" stroke="#f0f0f0" stroke-width="0.3" textLength="13.57" lengthAdjust="spacingAndGlyphs">2</text>
<text x="73.36" y="711.85" font-size="23.95" fill="#000" stroke="#f0f0f0" stroke-width="0.3" textLength="12.87" lengthAdjust="spacingAndGlyphs">4</text>
<text x="72.66" y="681.85" font-size="23.95" fill="#000" stroke="#f0f0f0" stroke-width="0.3" textLength="13.57" lengthAdjust="spacingAndGlyphs">6</text>
<text x="72.66" y="651.85" font-size="23.95" fill="#000" stroke="#f0f0f0" stroke-width="0.3" textLength="13.57" lengthAdjust="spacingAndGlyphs">8</text>
<text x="60.56" y="621.85" font-size="23.95" fill="#000" stroke="#f0f0f0" stroke-width="0.3" textLength="25.67" lengthAdjust="spacingAndGlyphs">10</text>
<text x="60.56" y="592.85" font-size="23.95" fill="#000" stroke="#f0f0f0" stroke-width="0.3" textLength="25.67" lengthAdjust="spacingAndGlyphs">12</text>
<text x="52.56" y="1350.85" font-size="23.95" fill="#000" stroke="#f0f0f0" stroke-width="0.3" textLength="33.67" lengthAdjust="spacingAndGlyphs">-12</text>
<text x="52.56" y="1320.85" font-size="23.95" fill="#000" stroke="#f0f0f0" stroke-width="0.3" textLength="33.67" lengthAdjust="spacingAndGlyphs">-10</text>
<text x="64.66" y="1290.85" font-size="23.95" fill="#000" stroke="#f0f0f0" stroke-width="0.3" textLength="21.57" lengthAdjust="spacingAndGlyphs">-8</text>
<text x="64.66" y="1260.85" font-size="23.95" fill="#000" stroke="#f0f0f0" stroke-width="0.3" textLength="21.57" lengthAdjust="spacingAndGlyphs">-6</text>
<text x="64.66" y="1230.85" font-size="23.95" fill="#000" stroke="#f0f0f0" stroke-width="0.3" textLength="21.57" lengthAdjust="spacingAndGlyphs">-4</text>
<text x="64.66" y="1200.85" font-size="23.95" fill="#000" stroke="#f0f0f0" stroke-width="0.3" textLength="21.57" lengthAdjust="spacingAndGlyphs">-2</text>
<text x="72.66" y="1170.85" font-size="23.95" fill="#000" stroke="#f0f0f0" stroke-width="0.3" textLength="13.57" lengthAdjust="spacingAndGlyphs">0</text>
<text x="72.66" y="1140.85" font-size="23.95" fill="#000" stroke="#f0f0f0" stroke-width="0.3" textLength="13.57" lengthAdjust="spacingAndGlyphs">2</text>
<text x="73.36" y="1110.85" font-size="23.95" fill="#000" stroke="#f0f0f0" stroke-width="0.3" textLength="12.87" lengthAdjust="spacingAndGlyphs">4</text>
<text x="72.66" y="1080.85" font-size="23.95" fill="#000" stroke="#f0f0f0" stroke-width="0.3" textLength="13.57" lengthAdjust="spacingAndGlyphs">6</text>
<text x="72.66" y="1050.85" font-size="23.95" fill="#000" stroke="#f0f0f0" stroke-width="0.3" textLength="13.57" lengthAdjust="spacingAndGlyphs">8</text>
<text x="60.56" y="1020.85" font-size="23.95" fill="#000" stroke="#f0f0f0" stroke-width="0.3" textLength="25.67" lengthAdjust="spacingAndGlyphs">10</text>
<text x="60.56" y="990.85" font-size="23.95" fill="#000" stroke="#f0f0f0" stroke-width="0.3" textLength="25.67" lengthAdjust="spacingAndGlyphs">12</text>
<text x="199.07" y="1388.67" font-size="23.47" fill="#000" stroke="#f0f0f0" stroke-width="0.3" textLength="92.64" lengthAdjust="spacingAndGlyphs">0.004000</text>
<text x="360.07" y="1388.67" font-size="23.47" fill="#000" stroke="#f0f0f0" stroke-width="0.3" textLength="92.64" lengthAdjust="spacingAndGlyphs">0.005000</text>
<text x="519.07" y="1388.67" font-size="23.47" fill="#000" stroke="#f0f0f0" stroke-width="0.3" textLength="92.64" lengthAdjust="spacingAndGlyphs">0.006000</text>
<text x="678.07" y="1388.67" font-size="23.47" fill="#000" stroke="#f0f0f0" stroke-width="0.3" textLength="92.64" lengthAdjust="spacingAndGlyphs">0.007000</text>
<text x="838.07" y="1388.67" font-size="23.47" fill="#000" stroke="#f0f0f0" stroke-width="0.3" textLength="92.64" lengthAdjust="spacingAndGlyphs">0.008000</text>
<text x="998.07" y="1388.67" font-size="23.47" fill="#000" stroke="#f0f0f0" stroke-width="0.3" textLength="92.64" lengthAdjust="spacingAndGlyphs">0.009000</text>
<text x="1158.07" y="1388.67" font-size="23.47" fill="#000" stroke="#f0f0f0" stroke-width="0.3" textLength="92.64" lengthAdjust="spacingAndGlyphs">0.010000</text>
<text x="1317.07" y="1388.67" font-size="23.47" fill="#000" stroke="#f0f0f0" stroke-width="0.3" textLength="92.64" lengthAdjust="spacingAndGlyphs">0.011000</text>
<text x="1477.07" y="1388.67" font-size="23.47" fill="#000" stroke="#f0f0f0" stroke-width="0.3" textLength="92.64" lengthAdjust="spacingAndGlyphs">0.012000</text>
<text x="1637.07" y="1388.67" font-size="23.47" fill="#000" stroke="#f0f0f0" stroke-width="0.3" textLength="92.64" lengthAdjust="spacingAndGlyphs">0.013000</text>
<text x="1796.07" y="1388.67" font-size="23.47" fill="#000" stroke="#f0f0f0" stroke-width="0.3" textLength="92.64" lengthAdjust="spacingAndGlyphs">0.014000</text>
<text x="45.91" y="1383.53" font-size="21.81" fill="#000" stroke="#f0f0f0" stroke-width="0.3" textLength="48.72" lengthAdjust="spacingAndGlyphs">s.ms</text>
<text x="115.57" y="187.55" font-size="22.53" fill="#c4c41e" textLength="88.74" lengthAdjust="spacingAndGlyphs">Angle [°]</text>
<text x="336.62" y="187.55" font-size="23.37" fill="#c4c41e" textLength="67.56" lengthAdjust="spacingAndGlyphs">147.87</text>
<text x="449.86" y="187.55" font-size="23.37" fill="#c4c41e" textLength="67.32" lengthAdjust="spacingAndGlyphs">157.92</text>
<text x="561.56" y="187.55" font-size="23.37" fill="#c4c41e" textLength="63.4" lengthAdjust="spacingAndGlyphs">-10.05</text>
<text x="114.15" y="586.85" font-size="22.82" fill="#ff1a1a" textLength="184.48" lengthAdjust="spacingAndGlyphs">Eng Speed Ref [V]</text>
<text x="336.36" y="587.27" font-size="22.27" fill="#ff1a1a" textLength="56.77" lengthAdjust="spacingAndGlyphs">4.199</text>
<text x="448.86" y="587.27" font-size="22.27" fill="#ff1a1a" textLength="56.77" lengthAdjust="spacingAndGlyphs">4.199</text>
<text x="562.86" y="587.27" font-size="22.27" fill="#ff1a1a" textLength="55.27" lengthAdjust="spacingAndGlyphs">0.000</text>
<text x="114.13" y="984.35" font-size="23.11" fill="#ff9416" textLength="173.99" lengthAdjust="spacingAndGlyphs">Eng Sync Volt [V]</text>
<text x="337.83" y="984.77" font-size="22.91" fill="#ff9416" textLength="61.35" lengthAdjust="spacingAndGlyphs">-0.071</text>
<text x="450.33" y="984.77" font-size="22.91" fill="#ff9416" textLength="61.35" lengthAdjust="spacingAndGlyphs">-0.071</text>
<text x="562.83" y="984.77" font-size="22.91" fill="#ff9416" textLength="55.35" lengthAdjust="spacingAndGlyphs">0.000</text>
<text x="64.35" y="1414.01" font-size="17.91" fill="#000" font-weight="bold" stroke="#ffffff" stroke-width="0.2" textLength="37.53" lengthAdjust="spacingAndGlyphs">Time</text>
<text x="115.13" y="1414.01" font-size="17.91" fill="#000" font-weight="bold" stroke="#ffffff" stroke-width="0.2" textLength="79.23" lengthAdjust="spacingAndGlyphs">0.011266</text>
<text x="205.15" y="1414.01" font-size="17.91" fill="#000" font-weight="bold" stroke="#ffffff" stroke-width="0.2" textLength="131.71" lengthAdjust="spacingAndGlyphs">Δ -0.001024 [s]</text>
<text x="1850.1" y="1475.29" font-size="18.4" fill="#000" stroke="#e1e1e1" stroke-width="0.3" textLength="40.29" lengthAdjust="spacingAndGlyphs">Close</text>
</g>
</svg>
</body></html>
